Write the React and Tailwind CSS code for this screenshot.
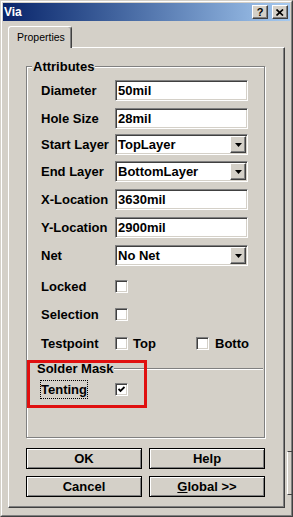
const sunken = 'border border-t-[#808080] border-l-[#808080] border-b-white border-r-white shadow-[inset_1px_1px_0_#404040,inset_-1px_-1px_0_#d4d0c8]'
const raised = 'border border-t-white border-l-white border-b-[#404040] border-r-[#404040] shadow-[inset_-1px_-1px_0_#808080]'

function Field({ value }) {
  return (
    <div className={`w-[133px] h-[21px] bg-white flex items-center pl-[2px] ${sunken}`}>{value}</div>
  )
}

function Select({ value }) {
  return (
    <div className={`w-[133px] h-[21px] bg-white flex items-center pl-[2px] pr-[1px] ${sunken}`}>
      <span className="flex-1">{value}</span>
      <div className={`w-[16px] h-[17px] bg-[#d4d0c8] flex items-center justify-center ${raised}`}>
        <svg width="7" height="4" viewBox="0 0 7 4">
          <path d="M0 0h7L3.5 4z" fill="#000" />
        </svg>
      </div>
    </div>
  )
}

function Check({ checked }) {
  return (
    <div className={`w-[13px] h-[13px] bg-white flex items-center justify-center shrink-0 ${sunken}`}>
      {checked && (
        <svg width="7" height="7" viewBox="0 0 7 7">
          <path d="M0.5 3L2.5 5L6.5 1" stroke="#000" strokeWidth="1.8" fill="none" />
        </svg>
      )}
    </div>
  )
}

function Row({ label, children, className = '' }) {
  return (
    <div className={`flex items-center h-[21px] ${className}`}>
      <span className="w-[74px] shrink-0">{label}</span>
      {children}
    </div>
  )
}

function Btn({ children }) {
  return (
    <div className="h-[21px] flex items-center justify-center bg-[#d4d0c8] border border-black shadow-[inset_1px_1px_0_#fff,inset_-1px_-1px_0_#808080]">
      {children}
    </div>
  )
}

export default function App() {
  return (
    <div className="w-[293px] h-[517px] relative overflow-hidden bg-[#d4d0c8] border border-t-[#d4d0c8] border-l-[#d4d0c8] border-r-[#404040] border-b-[#404040] text-black font-['Liberation_Sans',Arial,sans-serif] font-bold text-[13px] leading-[15px]">
      <div className="h-full flex flex-col p-[1px] border border-t-white border-l-white border-r-[#808080] border-b-[#808080]">
        {/* title bar */}
        <div className="h-[18px] shrink-0 flex items-center pl-[1px] pr-[2px] bg-linear-to-r from-[#0a246a] to-[#a6caf0]">
          <span className="flex-1 text-white text-[12px]">Via</span>
          <div className="flex gap-[4px]">
            <div className={`w-[16px] h-[14px] bg-[#d4d0c8] flex items-center justify-center text-[11px] leading-none ${raised}`}>?</div>
            <div className={`w-[16px] h-[14px] bg-[#d4d0c8] flex items-center justify-center ${raised}`}>
              <svg width="8" height="7" viewBox="0 0 8 7">
                <path d="M0.5 0.5L7 6.5M7 0.5L0.5 6.5" stroke="#000" strokeWidth="1.7" />
              </svg>
            </div>
          </div>
        </div>

        {/* tab */}
        <div className="pl-[5px] pt-[5px] shrink-0">
          <div className="relative z-10 -mb-[1px] w-[64px] h-[22px] bg-[#d4d0c8] rounded-t-[3px] border-t border-l border-r border-t-white border-l-white border-r-[#404040] shadow-[inset_-1px_0_0_#808080] flex items-center pl-[8px] font-normal text-[10.5px]">
            Properties
          </div>
        </div>

        {/* tab page */}
        <div className="flex-1 ml-[5px] mr-[5px] mb-[6px] border border-t-white border-l-white border-r-[#404040] border-b-[#404040] shadow-[inset_-1px_-1px_0_#808080]">
          <div className="relative ml-[17px] mt-[18px] w-[239px] h-[372px] border border-[#808080] shadow-[inset_1px_1px_0_#fff,1px_1px_0_#fff] pt-[13px] pl-[14px]">
            <span className="absolute -top-[8px] left-[5px] px-[1px] bg-[#d4d0c8]">Attributes</span>

            <Row label="Diameter"><Field value="50mil" /></Row>
            <Row label="Hole Size" className="mt-[7px]"><Field value="28mil" /></Row>
            <Row label="Start Layer" className="mt-[5px]"><Select value="TopLayer" /></Row>
            <Row label="End Layer" className="mt-[6px]"><Select value="BottomLayer" /></Row>
            <Row label="X-Location" className="mt-[7px]"><Field value="3630mil" /></Row>
            <Row label="Y-Location" className="mt-[7px]"><Field value="2900mil" /></Row>
            <Row label="Net" className="mt-[7px]"><Select value="No Net" /></Row>
            <Row label="Locked" className="mt-[10px]"><Check /></Row>
            <Row label="Selection" className="mt-[7px]"><Check /></Row>
            <Row label="Testpoint" className="mt-[8px]">
              <Check />
              <span className="ml-[5px] w-[63px]">Top</span>
              <Check />
              <span className="ml-[6px]">Botto</span>
            </Row>

            <div className="flex items-center mt-[7px] -ml-[4px] mr-[1px]">
              <span>Solder Mask</span>
              <div className="flex-1 h-[2px] border-t border-b border-t-[#808080] border-b-white" />
            </div>
            <div className="flex items-center h-[19px] mt-[4px] -ml-[1px]">
              <div className="w-[75px] shrink-0">
                <span className="border border-dotted border-black px-[0px] py-[1px]">Tenting</span>
              </div>
              <Check checked />
            </div>
          </div>

          <div className="ml-[17px] mt-[10px] grid grid-cols-[116px_116px] gap-x-[7px] gap-y-[7px]">
            <Btn>OK</Btn>
            <Btn>Help</Btn>
            <Btn>Cancel</Btn>
            <Btn><span><span className="underline">G</span>lobal &gt;&gt;</span></Btn>
          </div>
        </div>
      </div>

      {/* annotation box */}
      <div className="absolute left-[26px] top-[359px] w-[120px] h-[48px] border-[3px] border-[#e01010]" />
      {/* clipped control edge at right */}
      <div className="absolute left-[286px] top-[450px] w-[5px] h-[44px] border-t border-b border-l border-t-[#404040] border-b-[#404040] border-l-white" />
    </div>
  )
}
